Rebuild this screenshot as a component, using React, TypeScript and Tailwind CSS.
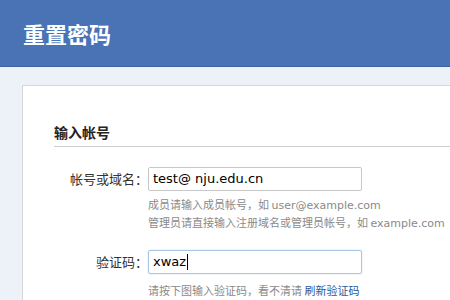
const cjk = "font-['Noto_Sans_CJK_SC','DejaVu_Sans',sans-serif]";
const latin = "font-['DejaVu_Sans','Noto_Sans_CJK_SC',sans-serif]";

function Field({ label, value, focused }: { label: string; value: string; focused?: boolean }) {
  return (
    <div className="flex items-center">
      <div className={`w-[125px] shrink-0 text-right text-[13px] leading-[24px] text-[#333] ${cjk}`}>{label}</div>
      <div
        className={`flex h-[24px] w-[214px] items-center rounded-[2px] border bg-white pl-[4px] text-[13px] text-black ${latin} ${
          focused ? "border-[#a9c6e6] shadow-[0_0_2px_#cfe0f2]" : "border-[#c8c8c8]"
        }`}
      >
        <span>{value}</span>
        {focused && <span className="ml-[1px] h-[16px] w-px bg-black" />}
      </div>
    </div>
  );
}

export default function App() {
  return (
    <div className={`h-[300px] w-[450px] overflow-hidden bg-[#edf2f8] ${cjk}`}>
      <div className="flex h-[67px] items-center border-b border-[#3f639e] bg-[#4a73b5] pl-[23px]">
        <h1 className="text-[22px] font-bold leading-none text-white">重置密码</h1>
      </div>

      <div className="pl-[22px] pt-[18px]">
        <div className="h-[300px] border-l border-t border-[#d6d6d6] bg-white pl-[31px] pt-[36px]">
          <div className="border-b border-[#cfcfcf] pb-[4px] text-[14px] font-bold leading-[20px] text-[#222]">输入帐号</div>

          <div className="-ml-[31px] mt-[20px]">
            <Field label="帐号或域名：" value="test@ nju.edu.cn" />
            <div className="ml-[125px] mt-[5px] text-[11px] leading-[16px] text-[#8a8a8a]">
              <div>
                成员请输入成员帐号，如 <span className={latin}>user@example.com</span>
              </div>
              <div>
                管理员请直接输入注册域名或管理员帐号，如 <span className={latin}>example.com</span>
              </div>
            </div>

            <div className="mt-[18px]">
              <Field label="验证码：" value="xwaz" focused />
            </div>
            <div className="ml-[125px] mt-[8px] text-[11px] leading-[16px] text-[#8a8a8a]">
              请按下图输入验证码，看不清请 <span className="text-[#2b579a]">刷新验证码</span>
            </div>
          </div>
        </div>
      </div>
    </div>
  );
}
